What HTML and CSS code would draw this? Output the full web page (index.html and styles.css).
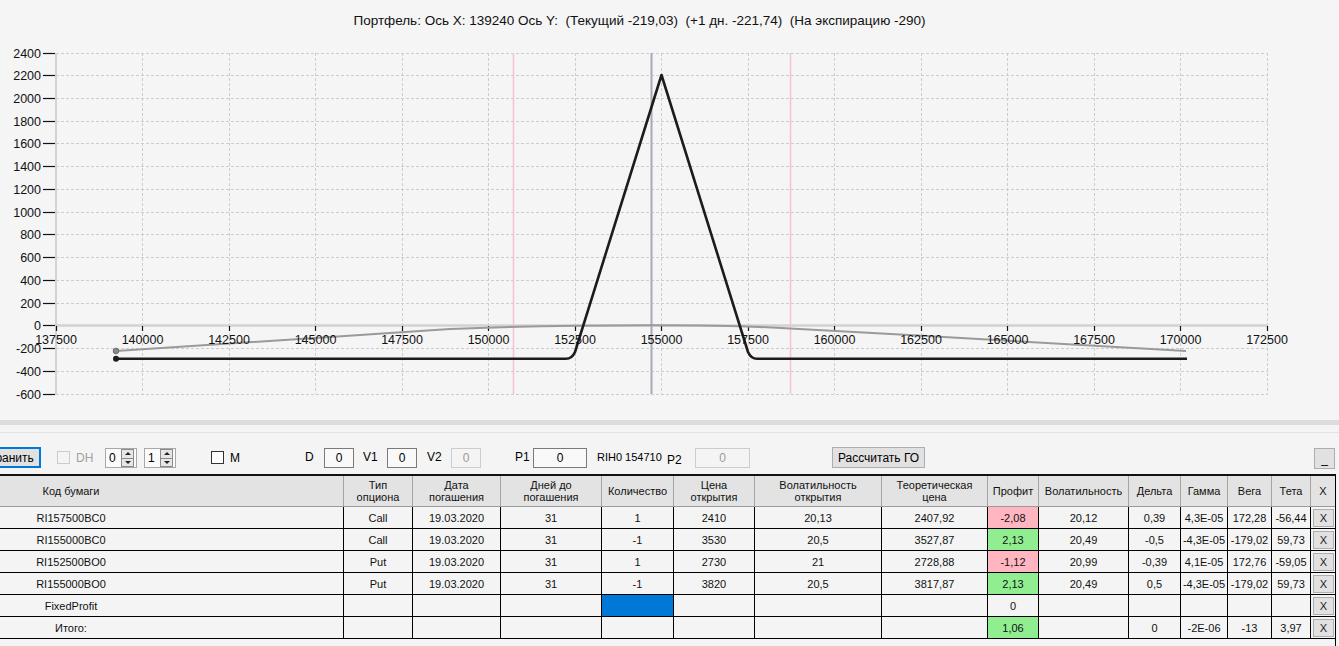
FILE: index.html
```html
<!DOCTYPE html>
<html lang="ru">
<head>
<meta charset="utf-8">
<title>Портфель</title>
<link rel="stylesheet" href="styles.css">
</head>
<body>
<div class="chart">
  <div class="chart-title">Портфель: Ось X: 139240 Ось Y:  (Текущий -219,03)  (+1 дн. -221,74)  (На экспирацию -290)</div>
  <svg class="plot" width="1339" height="380" viewBox="0 40 1339 380" xmlns="http://www.w3.org/2000/svg">
    <g class="grid-v">
      <line x1="142.5" y1="53" x2="142.5" y2="394"/>
      <line x1="229.5" y1="53" x2="229.5" y2="394"/>
      <line x1="315.5" y1="53" x2="315.5" y2="394"/>
      <line x1="402.5" y1="53" x2="402.5" y2="394"/>
      <line x1="488.5" y1="53" x2="488.5" y2="394"/>
      <line x1="575.5" y1="53" x2="575.5" y2="394"/>
      <line x1="661.5" y1="53" x2="661.5" y2="394"/>
      <line x1="748.5" y1="53" x2="748.5" y2="394"/>
      <line x1="834.5" y1="53" x2="834.5" y2="394"/>
      <line x1="921.5" y1="53" x2="921.5" y2="394"/>
      <line x1="1007.5" y1="53" x2="1007.5" y2="394"/>
      <line x1="1094.5" y1="53" x2="1094.5" y2="394"/>
      <line x1="1180.5" y1="53" x2="1180.5" y2="394"/>
      <line x1="1267.5" y1="53" x2="1267.5" y2="394"/>
    </g>
    <g class="grid-h">
      <line x1="56" y1="53.5" x2="1268" y2="53.5"/>
      <line x1="56" y1="75.5" x2="1268" y2="75.5"/>
      <line x1="56" y1="98.5" x2="1268" y2="98.5"/>
      <line x1="56" y1="121.5" x2="1268" y2="121.5"/>
      <line x1="56" y1="143.5" x2="1268" y2="143.5"/>
      <line x1="56" y1="166.5" x2="1268" y2="166.5"/>
      <line x1="56" y1="189.5" x2="1268" y2="189.5"/>
      <line x1="56" y1="212.5" x2="1268" y2="212.5"/>
      <line x1="56" y1="234.5" x2="1268" y2="234.5"/>
      <line x1="56" y1="257.5" x2="1268" y2="257.5"/>
      <line x1="56" y1="280.5" x2="1268" y2="280.5"/>
      <line x1="56" y1="303.5" x2="1268" y2="303.5"/>
      <line x1="56" y1="348.5" x2="1268" y2="348.5"/>
      <line x1="56" y1="371.5" x2="1268" y2="371.5"/>
      <line x1="56" y1="394.5" x2="1268" y2="394.5"/>
    </g>
    <line class="axis" x1="56" y1="53" x2="56" y2="395"/>
    <line class="axis axis-zero" x1="56" y1="325.5" x2="1268" y2="325.5"/>
    <line class="mark-red" x1="513.5" y1="53" x2="513.5" y2="394"/>
    <line class="mark-red" x1="790.5" y1="53" x2="790.5" y2="394"/>
    <line class="mark-cur" x1="651.5" y1="53" x2="651.5" y2="394"/>
    <g class="ticks">
      <line x1="43" y1="53.5" x2="55" y2="53.5"/>
      <line x1="43" y1="75.5" x2="55" y2="75.5"/>
      <line x1="43" y1="98.5" x2="55" y2="98.5"/>
      <line x1="43" y1="121.5" x2="55" y2="121.5"/>
      <line x1="43" y1="143.5" x2="55" y2="143.5"/>
      <line x1="43" y1="166.5" x2="55" y2="166.5"/>
      <line x1="43" y1="189.5" x2="55" y2="189.5"/>
      <line x1="43" y1="212.5" x2="55" y2="212.5"/>
      <line x1="43" y1="234.5" x2="55" y2="234.5"/>
      <line x1="43" y1="257.5" x2="55" y2="257.5"/>
      <line x1="43" y1="280.5" x2="55" y2="280.5"/>
      <line x1="43" y1="303.5" x2="55" y2="303.5"/>
      <line x1="43" y1="325.5" x2="55" y2="325.5"/>
      <line x1="43" y1="348.5" x2="55" y2="348.5"/>
      <line x1="43" y1="371.5" x2="55" y2="371.5"/>
      <line x1="43" y1="394.5" x2="55" y2="394.5"/>
      <line x1="56.5" y1="326" x2="56.5" y2="331"/>
      <line x1="142.5" y1="326" x2="142.5" y2="331"/>
      <line x1="229.5" y1="326" x2="229.5" y2="331"/>
      <line x1="315.5" y1="326" x2="315.5" y2="331"/>
      <line x1="402.5" y1="326" x2="402.5" y2="331"/>
      <line x1="488.5" y1="326" x2="488.5" y2="331"/>
      <line x1="575.5" y1="326" x2="575.5" y2="331"/>
      <line x1="661.5" y1="326" x2="661.5" y2="331"/>
      <line x1="748.5" y1="326" x2="748.5" y2="331"/>
      <line x1="834.5" y1="326" x2="834.5" y2="331"/>
      <line x1="921.5" y1="326" x2="921.5" y2="331"/>
      <line x1="1007.5" y1="326" x2="1007.5" y2="331"/>
      <line x1="1094.5" y1="326" x2="1094.5" y2="331"/>
      <line x1="1180.5" y1="326" x2="1180.5" y2="331"/>
      <line x1="1267.5" y1="326" x2="1267.5" y2="331"/>
    </g>
    <g class="ylabels">
      <text x="41" y="58">2400</text>
      <text x="41" y="80">2200</text>
      <text x="41" y="103">2000</text>
      <text x="41" y="126">1800</text>
      <text x="41" y="148">1600</text>
      <text x="41" y="171">1400</text>
      <text x="41" y="194">1200</text>
      <text x="41" y="217">1000</text>
      <text x="41" y="239">800</text>
      <text x="41" y="262">600</text>
      <text x="41" y="285">400</text>
      <text x="41" y="308">200</text>
      <text x="41" y="330">0</text>
      <text x="41" y="353">-200</text>
      <text x="41" y="376">-400</text>
      <text x="41" y="399">-600</text>
    </g>
    <path class="curve-now" d="M116,351 L300,339 L450,329 C520,326 600,325.3 652,325.3 C705,325.3 760,326.5 790,328.5 L900,334.5 L1186,351"/>
    <path class="curve-exp" d="M116,358.8 L566,358.8 Q572,358.8 575,352 L661.5,75 L748,352 Q751,358.8 757,358.8 L1187,358.8"/>
    <circle class="dot-now" cx="116" cy="351" r="2.8"/>
    <circle class="dot-exp" cx="116" cy="358.8" r="3"/>
    <g class="xlabels">
      <text x="56" y="344">137500</text>
      <text x="142.5" y="344">140000</text>
      <text x="229" y="344">142500</text>
      <text x="315.5" y="344">145000</text>
      <text x="402" y="344">147500</text>
      <text x="488.5" y="344">150000</text>
      <text x="575" y="344">152500</text>
      <text x="661.5" y="344">155000</text>
      <text x="748" y="344">157500</text>
      <text x="834.5" y="344">160000</text>
      <text x="921" y="344">162500</text>
      <text x="1007.5" y="344">165000</text>
      <text x="1094" y="344">167500</text>
      <text x="1180.5" y="344">170000</text>
      <text x="1267" y="344">172500</text>
    </g>
  </svg>
</div>
<div class="splitter"></div>
<div class="panel">
  <div class="toolbar">
    <button class="btn btn-save">Сохранить</button>
    <label class="chk chk-dh"><span class="box box-disabled"></span><span class="chk-text dim">DH</span></label>
    <div class="spin"><span class="spin-val">0</span><span class="spin-btns"><span class="spin-up"></span><span class="spin-down"></span></span></div>
    <div class="spin spin-2"><span class="spin-val">1</span><span class="spin-btns"><span class="spin-up"></span><span class="spin-down"></span></span></div>
    <label class="chk chk-m"><span class="box"></span><span class="chk-text">M</span></label>
    <span class="lbl lbl-d">D</span>
    <span class="tb tb-30">0</span>
    <span class="lbl lbl-v1">V1</span>
    <span class="tb tb-30">0</span>
    <span class="lbl lbl-v2">V2</span>
    <span class="tb tb-30 tb-disabled">0</span>
    <span class="lbl lbl-p1">P1</span>
    <span class="tb tb-54">0</span>
    <span class="lbl lbl-rih">RIH0 154710</span>
    <span class="lbl lbl-p2">P2</span>
    <span class="tb tb-55 tb-disabled">0</span>
    <button class="btn btn-calc">Рассчитать ГО</button>
    <span class="spacer"></span>
    <button class="btn btn-min">_</button>
  </div>
  <div class="table">
    <div class="hd first"><span class="code">Код бумаги</span></div>
    <div class="hd">Тип<br>опциона</div>
    <div class="hd">Дата<br>погашения</div>
    <div class="hd">Дней до<br>погашения</div>
    <div class="hd">Количество</div>
    <div class="hd">Цена<br>открытия</div>
    <div class="hd">Волатильность<br>открытия</div>
    <div class="hd">Теоретическая<br>цена</div>
    <div class="hd">Профит</div>
    <div class="hd">Волатильность</div>
    <div class="hd">Дельта</div>
    <div class="hd">Гамма</div>
    <div class="hd">Вега</div>
    <div class="hd">Тета</div>
    <div class="hd last">X</div>

    <div class="td first"><span class="code">RI157500BC0</span></div>
    <div class="td">Call</div><div class="td">19.03.2020</div><div class="td">31</div><div class="td">1</div><div class="td">2410</div><div class="td">20,13</div><div class="td">2407,92</div>
    <div class="td loss">-2,08</div><div class="td">20,12</div><div class="td">0,39</div><div class="td">4,3E-05</div><div class="td">172,28</div><div class="td">-56,44</div>
    <div class="td last"><button class="xbtn">X</button></div>

    <div class="td first"><span class="code">RI155000BC0</span></div>
    <div class="td">Call</div><div class="td">19.03.2020</div><div class="td">31</div><div class="td">-1</div><div class="td">3530</div><div class="td">20,5</div><div class="td">3527,87</div>
    <div class="td gain">2,13</div><div class="td">20,49</div><div class="td">-0,5</div><div class="td">-4,3E-05</div><div class="td">-179,02</div><div class="td">59,73</div>
    <div class="td last"><button class="xbtn">X</button></div>

    <div class="td first"><span class="code">RI152500BO0</span></div>
    <div class="td">Put</div><div class="td">19.03.2020</div><div class="td">31</div><div class="td">1</div><div class="td">2730</div><div class="td">21</div><div class="td">2728,88</div>
    <div class="td loss">-1,12</div><div class="td">20,99</div><div class="td">-0,39</div><div class="td">4,1E-05</div><div class="td">172,76</div><div class="td">-59,05</div>
    <div class="td last"><button class="xbtn">X</button></div>

    <div class="td first"><span class="code">RI155000BO0</span></div>
    <div class="td">Put</div><div class="td">19.03.2020</div><div class="td">31</div><div class="td">-1</div><div class="td">3820</div><div class="td">20,5</div><div class="td">3817,87</div>
    <div class="td gain">2,13</div><div class="td">20,49</div><div class="td">0,5</div><div class="td">-4,3E-05</div><div class="td">-179,02</div><div class="td">59,73</div>
    <div class="td last"><button class="xbtn">X</button></div>

    <div class="td first"><span class="code">FixedProfit</span></div>
    <div class="td"></div><div class="td"></div><div class="td"></div><div class="td sel"></div><div class="td"></div><div class="td"></div><div class="td"></div>
    <div class="td">0</div><div class="td"></div><div class="td"></div><div class="td"></div><div class="td"></div><div class="td"></div>
    <div class="td last"><button class="xbtn">X</button></div>

    <div class="td first"><span class="code">Итого:</span></div>
    <div class="td"></div><div class="td"></div><div class="td"></div><div class="td"></div><div class="td"></div><div class="td"></div><div class="td"></div>
    <div class="td gain">1,06</div><div class="td"></div><div class="td">0</div><div class="td">-2E-06</div><div class="td">-13</div><div class="td">3,97</div>
    <div class="td last"><button class="xbtn">X</button></div>
  </div>
</div>
</body>
</html>
```
FILE: styles.css
```css
* { box-sizing: border-box; }
html, body {
  margin: 0;
  padding: 0;
  width: 1339px;
  height: 646px;
  overflow: hidden;
  background: #f4f4f4;
  font-family: "Liberation Sans", Arial, sans-serif;
  color: #000;
}
.chart {
  height: 420px;
  background: #f5f5f5;
}
.chart-title {
  height: 40px;
  line-height: 41px;
  text-align: center;
  padding-right: 60px;
  font-size: 13.5px;
  white-space: pre;
  color: #111;
}
.plot { display: block; }
.grid-v line, .grid-h line {
  stroke: #cdcdcd;
  stroke-width: 1;
  stroke-dasharray: 3 2;
}
.axis { stroke: #d2d2d2; stroke-width: 2; }
.axis-zero { stroke-width: 2.5; }
.mark-red { stroke: #f2c4cc; stroke-width: 1.5; }
.mark-cur { stroke: #a3acb8; stroke-width: 2; }
.ticks line { stroke: #111; stroke-width: 1.2; }
.ylabels text {
  font-family: "Liberation Sans", Arial, sans-serif;
  font-size: 12.5px;
  text-anchor: end;
  fill: #111;
}
.xlabels text {
  font-family: "Liberation Sans", Arial, sans-serif;
  font-size: 12.5px;
  text-anchor: middle;
  fill: #111;
}
.curve-now { fill: none; stroke: #9a9a9a; stroke-width: 2; }
.curve-exp { fill: none; stroke: #1c1c1c; stroke-width: 2.6; stroke-linejoin: round; }
.dot-now { fill: #8a8a8a; stroke: #6a6a6a; stroke-width: 1; }
.dot-exp { fill: #1c1c1c; }

.splitter {
  height: 5px;
  background: #dcdcdc;
}
.panel {
  padding-top: 7px;
  background: #f4f4f4;
  height: 221px;
}
.toolbar {
  border-top: 1px solid #e2e2e2;
  height: 42px;
  display: flex;
  align-items: flex-start;
  padding-top: 14px;
  font-size: 12px;
}
.btn {
  font-family: "Liberation Sans", Arial, sans-serif;
  font-size: 12px;
  height: 21px;
  padding: 0;
  background: #e1e1e1;
  border: 1px solid #adadad;
  color: #000;
}
.btn-save {
  margin-left: -33px;
  width: 74px;
  border: 1px solid #0078d7;
  box-shadow: inset 0 0 0 1px #0078d7;
}
.chk {
  display: flex;
  align-items: center;
  height: 21px;
}
.chk-dh { margin-left: 16px; width: 48px; }
.chk-m { margin-left: 35px; width: 94px; }
.box {
  width: 13px;
  height: 13px;
  border: 1px solid #333;
  background: #fff;
}
.box-disabled { border-color: #cccccc; background: #f4f4f4; }
.chk-text { margin-left: 6px; }
.dim { color: #a0a0a0; }
.spin {
  width: 32px;
  height: 20px;
  margin-top: 1px;
  border: 1px solid #a8a8a8;
  background: #fbfbfb;
  display: flex;
  align-items: center;
}
.spin-2 { margin-left: 7px; }
.spin-val { flex: 1; padding-left: 3px; }
.spin-btns {
  width: 13px;
  height: 18px;
  margin-right: 2px;
  display: flex;
  flex-direction: column;
  border: 1px solid #8a8a8a;
  background: #e6e6e6;
}
.spin-up, .spin-down {
  flex: 1;
  position: relative;
}
.spin-up { border-bottom: 1px solid #8a8a8a; }
.spin-up::after, .spin-down::after {
  content: "";
  position: absolute;
  left: 3px;
  top: 2px;
  border-left: 3px solid transparent;
  border-right: 3px solid transparent;
}
.spin-up::after { border-bottom: 3px solid #222; }
.spin-down::after { border-top: 3px solid #222; }
.lbl {
  height: 21px;
  line-height: 21px;
  white-space: nowrap;
}
.lbl-d { width: 19px; }
.lbl-v1 { margin-left: 9px; width: 24px; }
.lbl-v2 { margin-left: 10px; width: 24px; }
.lbl-p1 { margin-left: 34px; width: 18px; }
.lbl-rih { margin-left: 10px; width: 70px; font-size: 11px; }
.lbl-p2 { width: 28px; padding-top: 3px; }
.tb {
  height: 20px;
  margin-top: 1px;
  border: 1px solid #7a7a7a;
  background: #f9f9f9;
  text-align: center;
  line-height: 18px;
}
.tb-30 { width: 30px; }
.tb-54 { width: 54px; }
.tb-55 { width: 55px; }
.tb-disabled { border-color: #cccccc; color: #9a9a9a; background: #f4f4f4; }
.btn-calc { margin-left: 82px; width: 93px; }
.spacer { flex: 1; }
.btn-min { width: 21px; margin-right: 4px; margin-top: 1px; }

.table {
  width: 1336px;
  height: 172px;
  border-top: 2px solid #111;
  border-right: 1px solid #000;
  display: grid;
  grid-template-columns: 344px 69px 88px 101px 72px 81px 127px 106px 51px 90px 52px 47px 44px 39px 24px;
  grid-template-rows: 31px repeat(6, 22px);
  align-content: start;
  font-size: 11px;
}
.hd, .td {
  display: flex;
  align-items: center;
  justify-content: center;
  text-align: center;
  white-space: nowrap;
}
.hd {
  background: #e3e3e3;
  border-right: 1px solid #a4a4a4;
  border-bottom: 1px solid #9a9a9a;
  line-height: 12px;
  color: #111;
}
.td {
  border-right: 1px solid #000;
  border-bottom: 1px solid #000;
  color: #111;
}
.hd.last, .td.last { border-right: none; }
.first { justify-content: flex-start; }
.code { display: block; width: 142px; text-align: center; }
.loss { background: #ffb6c1; }
.gain { background: #90ee90; }
.sel { background: #0078d7; }
.xbtn {
  width: 21px;
  height: 18px;
  margin-left: 1px;
  padding: 0;
  background: #e1e1e1;
  border: 1px solid #adadad;
  font-family: "Liberation Sans", Arial, sans-serif;
  font-size: 11px;
  color: #222;
}
```
